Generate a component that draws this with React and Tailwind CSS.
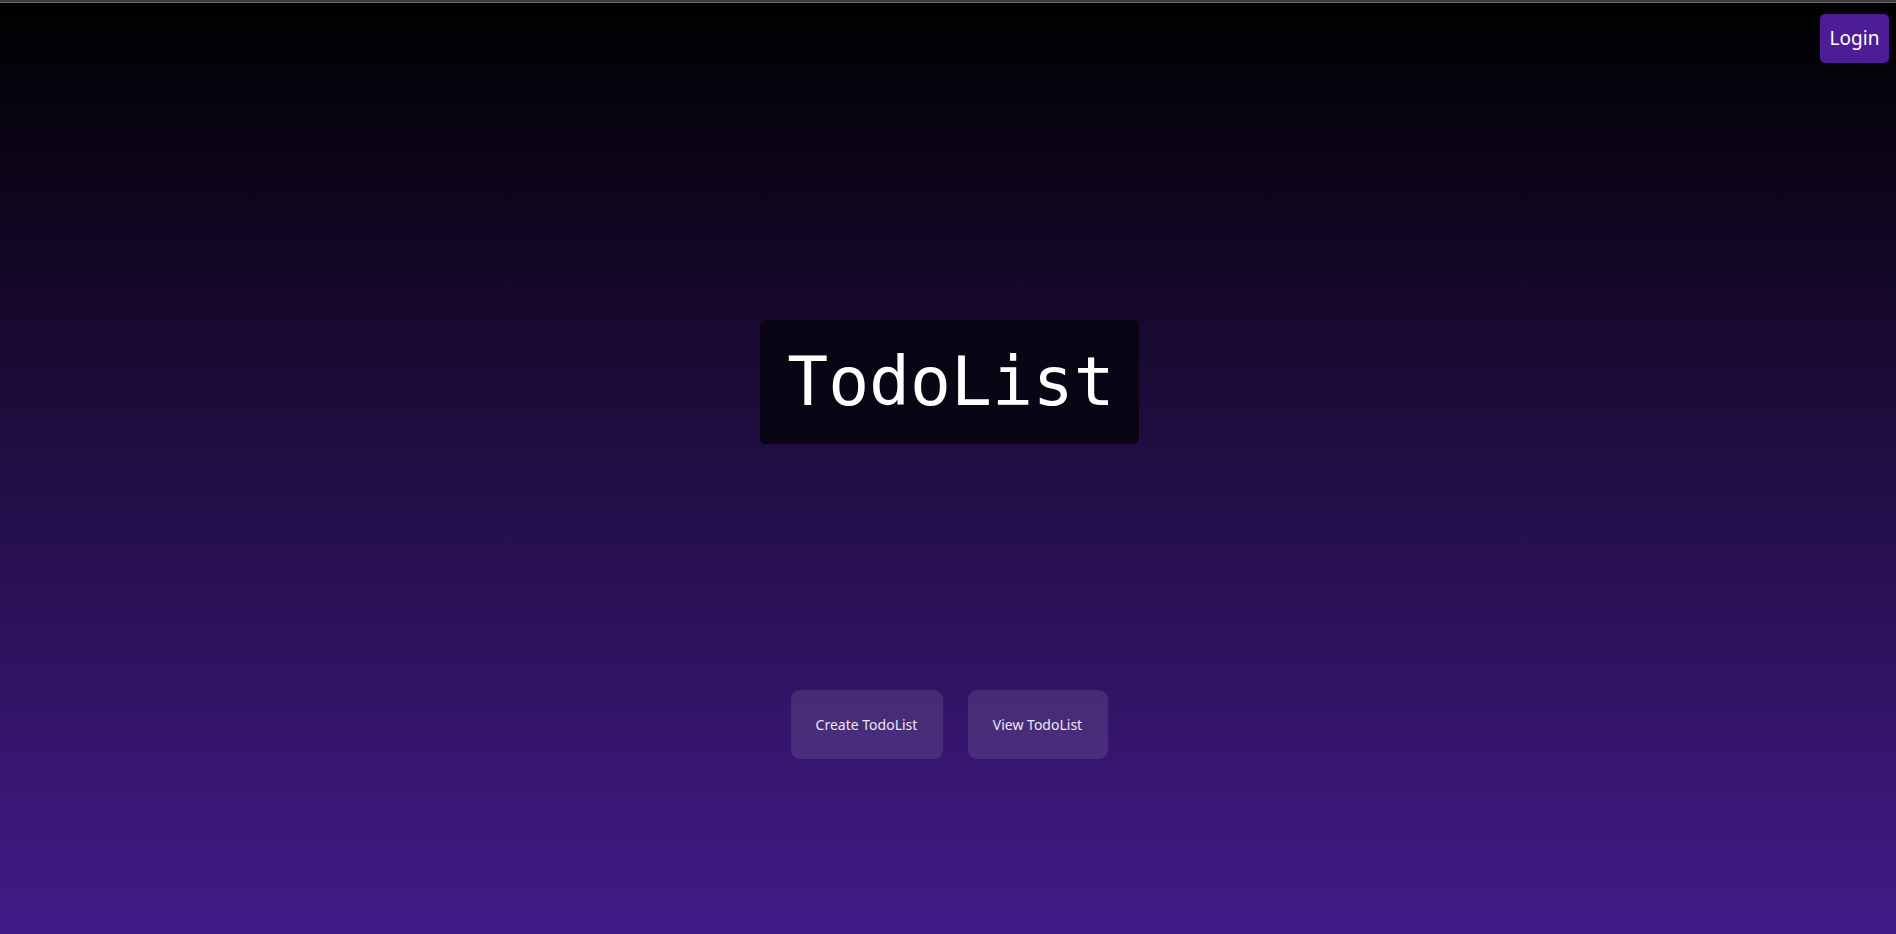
import React from "react";

const sans = { fontFamily: '"Noto Sans", "Open Sans", sans-serif' };

const NavButton = ({ label, width }) => (
  <button
    className={`${width} h-[69px] rounded-[9px] bg-white/10 text-[14px] text-[#ece8f4] flex items-center justify-center`}
    style={sans}
  >
    {label}
  </button>
);

export default function App() {
  return (
    <div className="w-full h-[934px] flex flex-col bg-linear-to-b/srgb from-black to-[#431b88] overflow-hidden">
      {/* window strip */}
      <div className="h-[3px] bg-[#3c3c40] border-b border-[#6a6a6e]" />

      {/* header */}
      <div className="flex justify-end pt-[11px] pr-[7px]">
        <button
          className="w-[69px] h-[49px] rounded-[5px] bg-[#4c1d95] text-white text-[19px]"
          style={sans}
        >
          Login
        </button>
      </div>

      {/* title */}
      <div className="self-center mt-[257px] ml-[2px] w-[379px] h-[124px] rounded-[5px] bg-[#0a0514] flex items-center justify-center">
        <h1
          className="text-white text-[68px] leading-none pl-[4px]"
          style={{ fontFamily: '"DejaVu Sans Mono", "Liberation Mono", monospace' }}
        >
          TodoList
        </h1>
      </div>

      {/* actions */}
      <div className="mt-[246px] ml-[2px] flex justify-center gap-[25px]">
        <NavButton label="Create TodoList" width="w-[152px]" />
        <NavButton label="View TodoList" width="w-[140px]" />
      </div>
    </div>
  );
}
